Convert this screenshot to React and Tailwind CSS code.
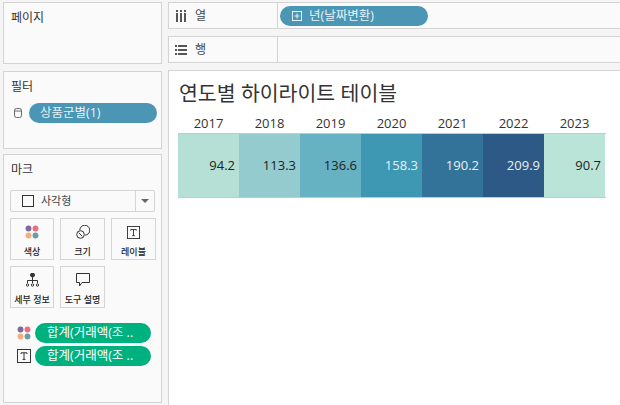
const font = { fontFamily: '"Open Sans", "Noto Sans CJK KR", sans-serif' };

const cells = [
  { year: '2017', value: '94.2', bg: 'bg-[#b6e0d6]', text: 'text-[#222222]' },
  { year: '2018', value: '113.3', bg: 'bg-[#93cbcf]', text: 'text-[#222222]' },
  { year: '2019', value: '136.6', bg: 'bg-[#66b1c2]', text: 'text-[#222222]' },
  { year: '2020', value: '158.3', bg: 'bg-[#3e97b3]', text: 'text-[#e8f0f4]' },
  { year: '2021', value: '190.2', bg: 'bg-[#337399]', text: 'text-[#e8f0f4]' },
  { year: '2022', value: '209.9', bg: 'bg-[#2c5985]', text: 'text-[#e8f0f4]' },
  { year: '2023', value: '90.7', bg: 'bg-[#bbe4d9]', text: 'text-[#222222]' },
];

function Dots({ size = 20 }) {
  return (
    <svg width={size} height={size} viewBox="0 0 20 20">
      <circle cx="5" cy="5" r="4.200" fill="#7f6a9c" />
      <circle cx="15" cy="5" r="4.200" fill="#ec6d7d" />
      <circle cx="5" cy="15" r="4.200" fill="#f6ae7f" />
      <circle cx="15" cy="15" r="4.200" fill="#6d9ca8" />
    </svg>
  );
}

function TBox({ size = 14 }) {
  return (
    <svg width={size} height={size} viewBox="0 0 14 14" fill="none" stroke="#333333">
      <rect x="0.5" y="0.5" width="13" height="13" />
      <path d="M4 5V3.8h6V5M7 3.8v6.6M5.6 10.4h2.8" />
    </svg>
  );
}

function MarkButton({ label, children }) {
  return (
    <div className="h-[42px] border border-[#d4d4d4] flex flex-col items-center">
      <div className="h-[21px] flex items-end justify-center">{children}</div>
      <span className="text-[9px] leading-[14px] mt-[6px] whitespace-nowrap text-[#222222] font-medium">{label}</span>
    </div>
  );
}

function GreenPill() {
  return (
    <div className="w-[116px] h-[20px] rounded-full bg-[#00b180] text-white text-[12.5px] leading-[19px] pl-[12px] whitespace-nowrap overflow-hidden">
      합계(거래액(조 ..
    </div>
  );
}

export default function App() {
  return (
    <div style={font} className="w-[620px] h-[405px] overflow-hidden bg-[#f5f5f5] flex text-[#333333] pt-[2px]">
      <div className="w-[159px] ml-[3px] flex flex-col shrink-0">
        <div className="h-[62px] bg-[#fafafa] border border-[#d4d4d4] px-[7px] pt-[6px] text-[12px] leading-[18px]">페이지</div>
        <div className="h-[78px] mt-[7px] bg-[#fafafa] border border-[#d4d4d4] pl-[7px] pt-[6px]">
          <div className="text-[12px] leading-[18px]">필터</div>
          <div className="flex items-center mt-[7px]">
            <svg width="10" height="12" viewBox="0 0 10 12" fill="none" stroke="#666666" className="ml-[2px]">
              <rect x="1.5" y="1.5" width="7" height="9" rx="2" />
              <path d="M1.5 4h7" />
            </svg>
            <div className="ml-[6px] w-[128px] h-[20px] rounded-full bg-[#4a96b4] text-[#e8f3f7] text-[12.5px] leading-[19px] pl-[11px]">상품군별(1)</div>
          </div>
        </div>
        <div className="h-[249px] mt-[5px] bg-[#fafafa] border border-[#d4d4d4] pl-[6px] pt-[6px]">
          <div className="text-[12px] leading-[18px] pl-[1px]">마크</div>
          <div className="w-[145px] h-[22px] mt-[11px] border border-[#d4d4d4] rounded-[2px] flex items-center">
            <div className="flex-1 flex items-center pl-[11px] border-r border-[#d4d4d4] h-full">
              <span className="w-[12px] h-[12px] border border-[#333333]" />
              <span className="ml-[7px] text-[11px] text-[#444444]">사각형</span>
            </div>
            <div className="w-[18px] flex justify-center">
              <span className="w-0 h-0 border-x-[4px] border-x-transparent border-t-[4px] border-t-[#666666]" />
            </div>
          </div>
          <div className="grid grid-cols-[44px_45px_45px] gap-[6px] mt-[6px]">
            <MarkButton label="색상"><Dots size={14} /></MarkButton>
            <MarkButton label="크기">
              <svg width="14" height="14" viewBox="0 0 14 14" fill="none" stroke="#333333">
                <path d="M3.800 5.200A5 5 0 1 1 9 10.200" />
                <circle cx="4.500" cy="9.500" r="3.800" />
                <path d="M2.700 7.700l3.600 3.600" />
              </svg>
            </MarkButton>
            <MarkButton label="레이블"><TBox size={13} /></MarkButton>
            <MarkButton label="세부 정보">
              <svg width="13" height="14" viewBox="0 0 13 14" fill="none" stroke="#333333">
                <circle cx="6.500" cy="2" r="2" fill="#333333" />
                <path d="M6.500 4v3.500M1.500 10V7.500h10V10M6.500 7.500V10" />
                <circle cx="1.500" cy="12" r="1.200" />
                <circle cx="6.500" cy="12" r="1.200" />
                <circle cx="11.500" cy="12" r="1.200" />
              </svg>
            </MarkButton>
            <MarkButton label="도구 설명">
              <svg width="14" height="14" viewBox="0 0 14 14" fill="none" stroke="#333333">
                <path d="M0.500 0.500h13v9H6l-2.500 3.500v-3.500h-3z" />
              </svg>
            </MarkButton>
          </div>
          <div className="flex items-center mt-[15px] pl-[7px] gap-[4px]">
            <Dots size={14} />
            <GreenPill />
          </div>
          <div className="flex items-center mt-[3px] pl-[7px] gap-[4px]">
            <TBox size={14} />
            <GreenPill />
          </div>
        </div>
      </div>

      <div className="flex-1 ml-[6px] flex flex-col min-w-0">
        <div className="h-[27px] bg-[#fafafa] border-y border-l border-[#d4d4d4] flex">
          <div className="w-[109px] border-r border-[#d4d4d4] flex items-center pl-[7px]">
            <svg width="10" height="12" viewBox="0 0 10 12" fill="#555555">
              <rect x="0" y="3" width="2" height="9" />
              <rect x="0" y="0" width="2" height="2" />
              <rect x="4" y="3" width="2" height="9" />
              <rect x="4" y="0" width="2" height="2" />
              <rect x="8" y="3" width="2" height="9" />
              <rect x="8" y="0" width="2" height="2" />
            </svg>
            <span className="ml-[9px] text-[12px] text-[#444444]">열</span>
          </div>
          <div className="flex items-center pl-[2px]">
            <div className="w-[148px] h-[20px] rounded-full bg-[#4a96b4] text-[#e8f3f7] text-[12.5px] flex items-center pl-[12px]">
              <svg width="10" height="10" viewBox="0 0 10 10" fill="none" stroke="#e8f3f7">
                <rect x="0.500" y="0.500" width="9" height="9" />
                <path d="M5 2.500v5M2.500 5h5" />
              </svg>
              <span className="ml-[7px] leading-[19px]">년(날짜변환)</span>
            </div>
          </div>
        </div>
        <div className="h-[27px] mt-[7px] bg-[#fafafa] border-y border-l border-[#d4d4d4] flex">
          <div className="w-[109px] border-r border-[#d4d4d4] flex items-center pl-[6px]">
            <svg width="12" height="10" viewBox="0 0 12 10" fill="#555555">
              <rect x="0" y="0" width="2" height="2" />
              <rect x="3" y="0" width="9" height="2" />
              <rect x="0" y="4" width="2" height="2" />
              <rect x="3" y="4" width="9" height="2" />
              <rect x="0" y="8" width="2" height="2" />
              <rect x="3" y="8" width="9" height="2" />
            </svg>
            <span className="ml-[8px] text-[12px] text-[#444444]">행</span>
          </div>
        </div>
        <div className="flex-1 mt-[7px] bg-white border-t border-l border-[#d4d4d4] pl-[9px]">
          <div className="text-[20.5px] leading-[28px] mt-[8px] ml-[1px] text-[#333333]">연도별 하이라이트 테이블</div>
          <div className="flex mt-[7px]">
            {cells.map((c) => (
              <div key={c.year} className="w-[61px] text-center text-[13px] leading-[18px] font-medium text-[#333333]">{c.year}</div>
            ))}
          </div>
          <div className="flex w-[428px] border-y border-[#c8c8c8] mt-[1px]">
            {cells.map((c) => (
              <div key={c.year} className={`w-[61px] h-[63px] ${c.bg} ${c.text} text-[13px] flex items-center justify-end pr-[4px]`}>{c.value}</div>
            ))}
          </div>
        </div>
      </div>
    </div>
  );
}
